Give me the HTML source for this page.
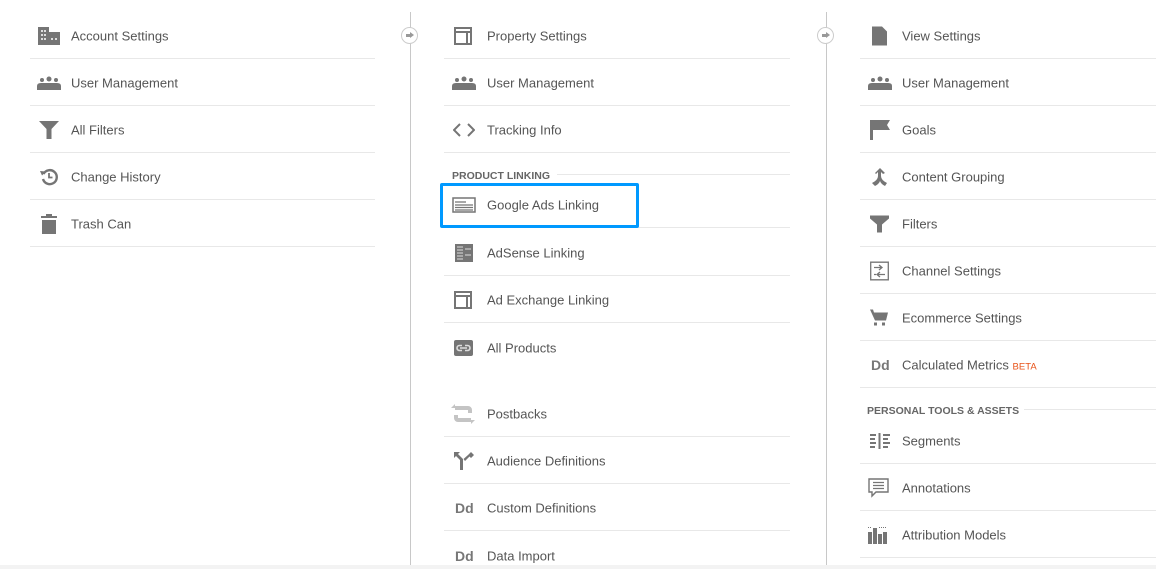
<!DOCTYPE html>
<html><head><meta charset="utf-8"><style>
*{margin:0;padding:0;box-sizing:border-box}
body{width:1156px;height:569px;background:#fff;position:relative;overflow:hidden;font-family:"Liberation Sans",Arial,sans-serif;color:#555}
.r{position:absolute;height:47px;border-bottom:1px solid #e8e8e8}
.r .t{position:absolute;top:calc(50% + 1px);transform:translateY(-50%);font-size:13px;white-space:nowrap;color:#555}
.r svg,.r .dd{position:absolute;top:calc(50% + 1px);transform:translateY(-50%)}
.dd{font-weight:bold;font-size:14px;color:#777}
.h{position:absolute;font-size:10.5px;font-weight:bold;color:#666;white-space:nowrap}
.hl{position:absolute;height:1px;background:#e8e8e8}
.vl{position:absolute;width:1px;background:#c8c8c8;top:12px;height:553px}
.c{position:absolute;width:17px;height:17px;border:1px solid #ccc;border-radius:50%;background:#fff}
.c:after{content:"";position:absolute;left:4px;top:6px;width:4px;height:3px;background:#999}
.c:before{content:"";position:absolute;left:8px;top:4px;border-left:4px solid #999;border-top:3.5px solid transparent;border-bottom:3.5px solid transparent}
.beta{color:#e8541a;font-size:9.5px}
</style></head><body>

<!-- column 1 -->
<div class="r" style="left:30px;top:12px;width:345px">
<svg style="left:7px" width="24" height="20" viewBox="0 0 24 20"><path fill="#757575" d="M1 1h11v5h11v13H1z"/><g fill="#ddd"><rect x="4" y="4" width="2" height="2"/><rect x="7" y="4" width="2" height="2"/><rect x="4" y="8" width="2" height="2"/><rect x="7" y="8" width="2" height="2"/><rect x="4" y="12" width="2" height="2"/><rect x="7" y="12" width="2" height="2"/><rect x="14" y="12" width="2" height="2"/><rect x="18" y="12" width="2" height="2"/></g></svg>
<span class="t" style="left:41px">Account Settings</span></div>
<div class="r" style="left:30px;top:59px;width:345px">
<svg style="left:7px" width="24" height="14" viewBox="0 0 24 14"><g fill="#757575"><circle cx="5" cy="4" r="2"/><circle cx="12" cy="3" r="2.5"/><circle cx="19" cy="4" r="2"/><path d="M0 14v-4q0-3 4-3h16q4 0 4 3v4z"/></g></svg>
<span class="t" style="left:41px">User Management</span></div>
<div class="r" style="left:30px;top:106px;width:345px">
<svg style="left:9px" width="20" height="18" viewBox="0 0 20 18"><path fill="#757575" d="M0 0h20l-7.5 8v10h-5V8z"/></svg>
<span class="t" style="left:41px">All Filters</span></div>
<div class="r" style="left:30px;top:153px;width:345px">
<svg style="left:10px" width="18" height="18" viewBox="0 0 18 18"><path fill="none" stroke="#757575" stroke-width="2.4" d="M3.5 6A7 7 0 1 1 3 11"/><path fill="#757575" d="M0 3l6 .5-4 4z"/><path fill="none" stroke="#757575" stroke-width="1.8" d="M9 5v4.5h3.5"/></svg>
<span class="t" style="left:41px">Change History</span></div>
<div class="r" style="left:30px;top:200px;width:345px">
<svg style="left:11px" width="16" height="20" viewBox="0 0 16 20"><path fill="#757575" d="M0 2h5V0h6v2h5v2H0zM1 6h14v14H1z"/></svg>
<span class="t" style="left:41px">Trash Can</span></div>

<!-- col 2 -->
<div class="vl" style="left:410px"></div>
<div class="c" style="left:401px;top:27px"></div>

<div class="r" style="left:444px;top:12px;width:346px">
<svg style="left:10px" width="18" height="18" viewBox="0 0 18 18"><path fill="none" stroke="#757575" stroke-width="2" d="M1 1h16v16H1zM1 5h16M13 5v12"/></svg>
<span class="t" style="left:43px">Property Settings</span></div>
<div class="r" style="left:444px;top:59px;width:346px">
<svg style="left:8px" width="24" height="14" viewBox="0 0 24 14"><g fill="#757575"><circle cx="5" cy="4" r="2"/><circle cx="12" cy="3" r="2.5"/><circle cx="19" cy="4" r="2"/><path d="M0 14v-4q0-3 4-3h16q4 0 4 3v4z"/></g></svg>
<span class="t" style="left:43px">User Management</span></div>
<div class="r" style="left:444px;top:106px;width:346px">
<svg style="left:9px" width="22" height="14" viewBox="0 0 22 14"><path fill="none" stroke="#757575" stroke-width="2" d="M7 1L1 7l6 6M15 1l6 6-6 6"/></svg>
<span class="t" style="left:43px">Tracking Info</span></div>
<div class="h" style="left:452px;top:170px">PRODUCT LINKING</div>
<div class="hl" style="left:557px;top:174px;width:233px"></div>
<div class="r" style="left:444px;top:181px;width:346px">
<svg style="left:8px" width="24" height="16" viewBox="0 0 24 16"><path fill="none" stroke="#757575" stroke-width="1.5" d="M1 1h22v14H1z"/><path stroke="#757575" stroke-width="1.2" d="M3 5h11M3 8h18M3 10.5h18M3 13h18"/></svg>
<span class="t" style="left:43px">Google Ads Linking</span></div>
<div style="position:absolute;left:440px;top:183px;width:199px;height:45px;border:3px solid #0099ff;border-radius:2px"></div>
<div class="r" style="left:444px;top:229px;width:346px">
<svg style="left:11px" width="18" height="18" viewBox="0 0 18 18"><path fill="#757575" d="M0 0h18v18H0z"/><path stroke="#ddd" stroke-width="1" d="M2 3h6M2 6h6M2 9h6M2 12h6M2 15h6M10 5h6M10 11h6"/></svg>
<span class="t" style="left:43px">AdSense Linking</span></div>
<div class="r" style="left:444px;top:276px;width:346px">
<svg style="left:10px" width="18" height="18" viewBox="0 0 18 18"><path fill="none" stroke="#757575" stroke-width="2" d="M1 1h16v16H1zM1 5h16M13 5v12"/></svg>
<span class="t" style="left:43px">Ad Exchange Linking</span></div>
<div class="r" style="left:444px;top:323px;width:346px;border-bottom:none">
<svg style="left:10px" width="19" height="16" viewBox="0 0 19 16"><rect width="19" height="16" rx="2" fill="#757575"/><path fill="none" stroke="#ddd" stroke-width="1.6" d="M8 5.5H5.5a2.5 2.5 0 0 0 0 5H8M11 5.5h2.5a2.5 2.5 0 0 1 0 5H11M6 8h7"/></svg>
<span class="t" style="left:43px">All Products</span></div>
<div class="r" style="left:444px;top:390px;width:346px">
<svg style="left:7px" width="24" height="24" viewBox="0 0 24 24"><g fill="#c4c4c4"><path d="M4 4h13a4 4 0 0 1 4 4v3h-4V8H4z"/><path d="M4 6L0 6l4-4z"/><path d="M20 16H7v-3H3v3a4 4 0 0 0 4 4h13z"/><path d="M20 18h4l-4 4z"/></g></svg>
<span class="t" style="left:43px">Postbacks</span></div>
<div class="r" style="left:444px;top:437px;width:346px">
<svg style="left:10px" width="20" height="18" viewBox="0 0 20 18"><path fill="#757575" d="M0 0h6l-2 2 5 5v11H6V8L2 4 0 6zM14 3l3-3 3 3-3 3-1.5-1.5L11 9 9.5 7z"/></svg>
<span class="t" style="left:43px">Audience Definitions</span></div>
<div class="r" style="left:444px;top:484px;width:346px">
<span class="dd" style="left:11px">Dd</span>
<span class="t" style="left:43px">Custom Definitions</span></div>
<div class="r" style="left:444px;top:531px;width:346px;border-bottom:none">
<span class="dd" style="left:11px">Dd</span>
<span class="t" style="left:43px">Data Import</span></div>

<!-- col 3 -->
<div class="vl" style="left:826px"></div>
<div class="c" style="left:817px;top:27px"></div>

<div class="r" style="left:860px;top:12px;width:296px">
<svg style="left:12px" width="15" height="19" viewBox="0 0 15 19"><path fill="#757575" d="M0 0h10l5 5v14H0z"/></svg>
<span class="t" style="left:42px">View Settings</span></div>
<div class="r" style="left:860px;top:59px;width:296px">
<svg style="left:8px" width="24" height="14" viewBox="0 0 24 14"><g fill="#757575"><circle cx="5" cy="4" r="2"/><circle cx="12" cy="3" r="2.5"/><circle cx="19" cy="4" r="2"/><path d="M0 14v-4q0-3 4-3h16q4 0 4 3v4z"/></g></svg>
<span class="t" style="left:42px">User Management</span></div>
<div class="r" style="left:860px;top:106px;width:296px">
<svg style="left:10px" width="20" height="20" viewBox="0 0 20 20"><path fill="#757575" d="M0 0h20l-3 5 3 5H3v10H0z"/></svg>
<span class="t" style="left:42px">Goals</span></div>
<div class="r" style="left:860px;top:153px;width:296px">
<svg style="left:12px" width="16" height="18" viewBox="0 0 16 18"><path fill="#757575" d="M8 0l5 5-2 1-2-2v4q0 4 6 7l-2 3q-4-2-5-5-1 3-5 5L0 15q6-3 6-7V4L4 6 3 5z"/></svg>
<span class="t" style="left:42px">Content Grouping</span></div>
<div class="r" style="left:860px;top:200px;width:296px">
<svg style="left:10px" width="19" height="17" viewBox="0 0 19 17"><path fill="#757575" d="M0 0h19v3l-7 6v8H7V9L0 3z"/></svg>
<span class="t" style="left:42px">Filters</span></div>
<div class="r" style="left:860px;top:247px;width:296px">
<svg style="left:10px" width="19" height="19" viewBox="0 0 19 19"><path fill="none" stroke="#757575" stroke-width="1.3" d="M.7.7h17.6v17.6H.7z"/><path fill="none" stroke="#757575" stroke-width="1.3" d="M4 6h8M9 3.5L12 6 9 8.5M7 13h8M4 13h2M10 10.5L7 13l3 2.5"/></svg>
<span class="t" style="left:42px">Channel Settings</span></div>
<div class="r" style="left:860px;top:294px;width:296px">
<svg style="left:10px" width="18" height="17" viewBox="0 0 18 17"><path fill="#757575" d="M0 0h3l1 3h14l-2 8H5zM4 13h3v3H4zM12 13h3v3h-3z"/></svg>
<span class="t" style="left:42px">Ecommerce Settings</span></div>
<div class="r" style="left:860px;top:341px;width:296px">
<span class="dd" style="left:11px">Dd</span>
<span class="t" style="left:42px">Calculated Metrics <span class="beta">BETA</span></span></div>
<div class="h" style="left:867px;top:405px">PERSONAL TOOLS &amp; ASSETS</div>
<div class="hl" style="left:1024px;top:409px;width:132px"></div>
<div class="r" style="left:860px;top:417px;width:296px">
<svg style="left:10px" width="20" height="16" viewBox="0 0 20 16"><g fill="#757575"><rect x="0" y="1" width="6" height="2"/><rect x="0" y="5" width="5" height="2"/><rect x="0" y="9" width="6" height="2"/><rect x="0" y="13" width="5" height="2"/><rect x="8.5" y="0" width="2" height="16"/><rect x="13" y="1" width="7" height="2"/><rect x="13" y="5" width="5" height="2"/><rect x="13" y="9" width="7" height="2"/><rect x="13" y="13" width="5" height="2"/></g></svg>
<span class="t" style="left:42px">Segments</span></div>
<div class="r" style="left:860px;top:464px;width:296px">
<svg style="left:8px" width="21" height="20" viewBox="0 0 21 20"><path fill="none" stroke="#757575" stroke-width="1.4" d="M1 1h19v13H8l-4 4v-4H1z"/><path stroke="#757575" stroke-width="1.3" d="M5 4.5h11M5 7.5h11M5 10.5h11"/></svg>
<span class="t" style="left:42px">Annotations</span></div>
<div class="r" style="left:860px;top:511px;width:296px">
<svg style="left:8px" width="20" height="18" viewBox="0 0 20 18"><g fill="#757575"><rect x="0" y="6" width="4" height="12"/><rect x="5" y="2" width="4" height="16"/><rect x="10" y="8" width="4" height="10"/><rect x="15" y="6" width="4" height="12"/><rect x="0" y="1" width="1" height="1"/><rect x="2" y="1" width="1" height="1"/><rect x="11" y="1" width="1" height="1"/><rect x="13" y="1" width="1" height="1"/><rect x="15" y="1" width="1" height="1"/><rect x="17" y="1" width="1" height="1"/></g></svg>
<span class="t" style="left:42px">Attribution Models</span></div>

<div style="position:absolute;left:0;top:565px;width:1156px;height:4px;background:#f3f3f3"></div>
</body></html>
